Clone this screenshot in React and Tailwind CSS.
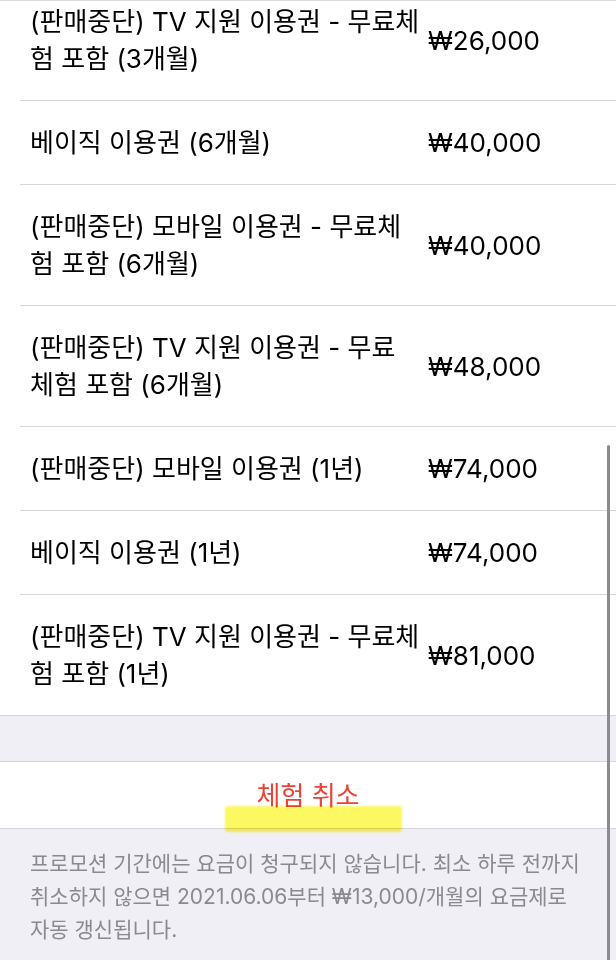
import React from 'react';

const plans = [
  { lines: ['(판매중단) TV 지원 이용권 - 무료체', '험 포함 (3개월)'], price: '₩26,000', first: true },
  { lines: ['베이직 이용권 (6개월)'], price: '₩40,000' },
  { lines: ['(판매중단) 모바일 이용권 - 무료체', '험 포함 (6개월)'], price: '₩40,000' },
  { lines: ['(판매중단) TV 지원 이용권 - 무료', '체험 포함 (6개월)'], price: '₩48,000' },
  { lines: ['(판매중단) 모바일 이용권 (1년)'], price: '₩74,000' },
  { lines: ['베이직 이용권 (1년)'], price: '₩74,000' },
  { lines: ['(판매중단) TV 지원 이용권 - 무료체', '험 포함 (1년)'], price: '₩81,000', last: true },
];

function PlanRow({ plan }) {
  const pad = plan.first ? 'pt-[2px] pb-[23px]' : 'py-[23px]';
  const border = plan.last ? '' : 'border-b border-[#d6d6da]';
  return (
    <div className={`ml-[20px] pl-[10px] flex items-center ${pad} ${border}`}>
      <div className="w-[398px] shrink-0 text-[26px] leading-[37px] text-black">
        {plan.lines.map((line, i) => (
          <div key={i} className="whitespace-nowrap">{line}</div>
        ))}
      </div>
      <div className="text-[26px] leading-[37px] text-black whitespace-nowrap">{plan.price}</div>
    </div>
  );
}

export default function App() {
  return (
    <div
      className="relative w-[616px] h-[960px] overflow-hidden bg-white"
      style={{ fontFamily: 'Inter, "Noto Sans CJK KR", sans-serif' }}
    >
      <div className="h-px bg-[#dcdce0]" />

      <div className="bg-white">
        {plans.map((plan, index) => (
          <PlanRow key={index} plan={plan} />
        ))}
      </div>

      <div className="h-[47px] bg-[#f0eff5] border-y border-[#d6d6da]" />

      <div className="h-[67px] flex items-center justify-center border-b border-[#d6d6da] bg-white">
        <span className="text-[26px] text-[#eb4137]">체험 취소</span>
      </div>

      <div className="bg-[#f0eff5] h-full pl-[30px] pt-[18px] text-[21px] leading-[33px] text-[#8a8a8e]">
        <div className="whitespace-nowrap">프로모션 기간에는 요금이 청구되지 않습니다. 최소 하루 전까지</div>
        <div className="whitespace-nowrap">취소하지 않으면 2021.06.06부터 ₩13,000/개월의 요금제로</div>
        <div className="whitespace-nowrap">자동 갱신됩니다.</div>
      </div>

      {/* marker highlight */}
      <div className="absolute left-[225px] top-[806px] w-[177px] h-[26px] rounded-[3px] bg-[#fcf862] blur-[1px] mix-blend-multiply" />

      {/* scroll indicator */}
      <div className="absolute left-[607px] top-[445px] w-[3px] h-[520px] rounded-full bg-[#8c8c8c]" />
    </div>
  );
}
